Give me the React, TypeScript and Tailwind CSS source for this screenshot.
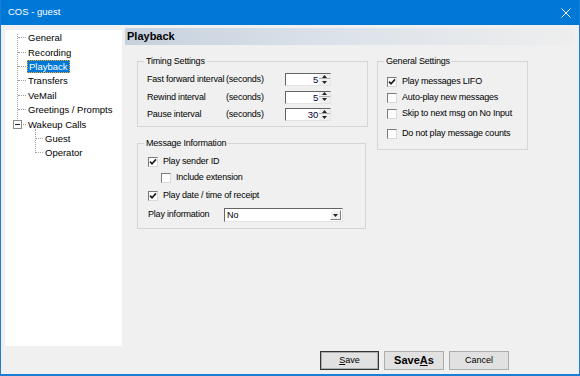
import React from "react";

const ui = { fontFamily: '"Liberation Sans", Arial, sans-serif' };

const tree = [
  { name: "General", lvl: 0 },
  { name: "Recording", lvl: 0 },
  { name: "Playback", lvl: 0, sel: true },
  { name: "Transfers", lvl: 0 },
  { name: "VeMail", lvl: 0 },
  { name: "Greetings / Prompts", lvl: 0 },
  { name: "Wakeup Calls", lvl: 0, box: true },
  { name: "Guest", lvl: 1 },
  { name: "Operator", lvl: 1 },
];

function Check({ on }: { on?: boolean }) {
  return (
    <span className="w-[10px] h-[10px] shrink-0 flex items-center justify-center bg-white border border-t-[#7a7a7a] border-l-[#7a7a7a] border-b-[#d8d8d8] border-r-[#d8d8d8]">
      {on && (
        <svg width="8" height="8" viewBox="0 0 8 8">
          <path d="M1 3.6 L3 5.8 L7 1.4" stroke="#1a1a1a" strokeWidth="1.6" fill="none" />
        </svg>
      )}
    </span>
  );
}

function Arrow({ up }: { up?: boolean }) {
  return (
    <svg width="5" height="3" viewBox="0 0 5 3">
      <path d={up ? "M0 3 L2.5 0 L5 3 Z" : "M0 0 L5 0 L2.5 3 Z"} fill="#222" />
    </svg>
  );
}

function Spin({ v }: { v: string }) {
  return (
    <div className="w-[46px] h-[13px] flex bg-white border border-t-[#646464] border-l-[#646464] border-b-[#e3e3e3] border-r-[#e3e3e3]">
      <div className="flex-1 text-right pr-[1px] text-[9.5px] leading-[11px] text-[#000033]">{v}</div>
      <div className="w-[11px] flex flex-col bg-[#f0f0f0]">
        <div className="h-[5px] flex items-center justify-center border-b border-[#b0b0b0]">
          <Arrow up />
        </div>
        <div className="flex-1 flex items-center justify-center">
          <Arrow />
        </div>
      </div>
    </div>
  );
}

function Group({ title, className, children }: { title: string; className: string; children: React.ReactNode }) {
  return (
    <div className={"relative border border-[#d5d5d5] " + className}>
      <span className="absolute -top-[7px] left-[6px] px-[2px] bg-[#f0f0f0] text-[9px] leading-[12px] tracking-[-0.2px]">{title}</span>
      {children}
    </div>
  );
}

function Row({ label, on, className }: { label: string; on?: boolean; className: string }) {
  return (
    <div className={"flex items-center gap-[5px] " + className}>
      <Check on={on} />
      <span className="text-[9px] tracking-[-0.2px]">{label}</span>
    </div>
  );
}

export default function App() {
  return (
    <div style={ui} className="w-[580px] h-[376px] flex flex-col bg-[#f0f0f0] text-black border-x border-b-2 border-[#1a7fd4] overflow-hidden">
      <div className="h-[25px] shrink-0 bg-[#0078d7] flex items-center justify-between pl-[7px] pr-[8px] text-white">
        <span className="text-[9.5px]">COS - guest</span>
        <svg width="10" height="10" viewBox="0 0 10 10">
          <path d="M0.5 0.5 L9.5 9.5 M9.5 0.5 L0.5 9.5" stroke="white" strokeWidth="1" />
        </svg>
      </div>

      <div className="flex-1 flex pl-[4px] pr-[5px] pt-[4px]">
        <div className="w-[117px] h-[316px] mt-[1px] bg-white relative pt-[0.5px]">
          {/* tree lines */}
          <div className="absolute left-[12px] top-[4px] h-[87px] border-l border-dotted border-[#a0a0a0]" />
          <div className="absolute left-[30px] top-[99px] h-[24px] border-l border-dotted border-[#a0a0a0]" />
          {tree.map((t) => (
            <div key={t.name} className="h-[14.4px] flex items-center relative">
              <div
                className={
                  t.lvl === 0
                    ? "w-[8px] ml-[13px] border-t border-dotted border-[#a0a0a0]"
                    : "w-[7px] ml-[31px] border-t border-dotted border-[#a0a0a0]"
                }
              />
              {t.box && (
                <span className="absolute left-[8px] top-[3px] w-[9px] h-[9px] bg-white border border-[#8c8c8c] flex items-center justify-center">
                  <span className="w-[5px] border-t border-[#222]" />
                </span>
              )}
              <span
                className={
                  t.sel
                    ? "ml-[1px] px-[1px] text-[9.5px] leading-[11px] bg-[#0078d7] text-white border border-dotted border-[#f5a623]"
                    : "ml-[2px] text-[9.5px] leading-[11px]"
                }
              >
                {t.name}
              </span>
            </div>
          ))}
        </div>

        <div className="flex-1 flex flex-col ml-[3px] -mt-[1px]">
          <div className="h-[17px] bg-linear-to-r from-[#c6d1de] via-[#dde3ea] to-[#eeeeee] flex items-center pl-[2px]">
            <span className="text-[11px] font-bold">Playback</span>
          </div>

          <div className="flex mt-[16px] pl-[12px] gap-[9px]">
            <div className="flex flex-col">
              <Group title="Timing Settings" className="w-[231px] h-[66px] pt-[9px] pl-[9px]">
                {[
                  ["Fast forward interval", "5"],
                  ["Rewind interval", "5"],
                  ["Pause interval", "30"],
                ].map(([l, v]) => (
                  <div key={l} className="h-[17.5px] flex items-center text-[9px] tracking-[-0.2px]">
                    <span className="w-[79px]">{l}</span>
                    <span className="w-[59px]">(seconds)</span>
                    <Spin v={v} />
                  </div>
                ))}
              </Group>

              <Group title="Message Information" className="w-[229px] h-[86px] mt-[16px] pl-[10px] pt-[10px]">
                <Row label="Play sender ID" on className="h-[16px]" />
                <Row label="Include extension" className="h-[16px] pl-[13px]" />
                <Row label="Play date / time of receipt" on className="h-[19px]" />
                <div className="h-[20px] flex items-center">
                  <span className="w-[76px] text-[9px] tracking-[-0.2px]">Play information</span>
                  <div className="w-[119px] h-[14px] flex bg-white border border-t-[#646464] border-l-[#646464] border-b-[#e3e3e3] border-r-[#e3e3e3]">
                    <span className="flex-1 pl-[2px] text-[9px] leading-[12px]">No</span>
                    <span className="w-[11px] h-[10px] mt-[1px] mr-[1px] flex items-center justify-center bg-[#f0f0f0] border border-t-white border-l-white border-b-[#808080] border-r-[#808080]">
                      <Arrow />
                    </span>
                  </div>
                </div>
              </Group>
            </div>

            <Group title="General Settings" className="w-[151px] h-[89px] pl-[9px] pt-[12px]">
              <Row label="Play messages LIFO" on className="h-[16px]" />
              <Row label="Auto-play new messages" className="h-[16px]" />
              <Row label="Skip to next msg on No Input" className="h-[16px]" />
              <Row label="Do not play message counts" className="h-[16px] mt-[4px]" />
            </Group>
          </div>

          <div className="mt-auto mb-[4px] flex justify-end gap-[5px] pr-[65px]">
            <button className="w-[59px] h-[19px] bg-[#e1e1e1] border border-[#333] shadow-[inset_0_0_0_1px_#adadad] text-[9px]">
              <span className="underline">S</span>ave
            </button>
            <button className="w-[60px] h-[19px] bg-[#e1e1e1] border border-[#adadad] text-[11px] font-bold">
              Save<span className="underline">A</span>s
            </button>
            <button className="w-[60px] h-[19px] bg-[#e1e1e1] border border-[#adadad] text-[9px]">Cancel</button>
          </div>
        </div>
      </div>
    </div>
  );
}
